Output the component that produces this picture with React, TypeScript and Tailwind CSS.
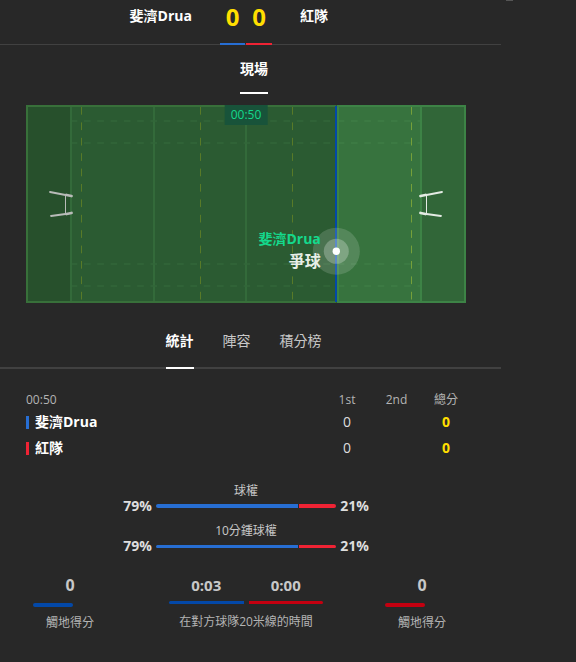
import { useState } from 'react';

interface Team {
  name: string;
  first: number;
  total: number;
  color: string;
}

interface Possession {
  label: string;
  home: number;
  away: number;
  bar: string;
}

const teams: Team[] = [
  { name: '斐濟Drua', first: 0, total: 0, color: 'bg-[#276ed3]' },
  { name: '紅隊', first: 0, total: 0, color: 'bg-[#ef2334]' },
];

const possession: Possession[] = [
  { label: '球權', home: 79, away: 21, bar: 'h-1' },
  { label: '10分鍾球權', home: 79, away: 21, bar: 'h-[3px]' },
];

const tabs = ['統計', '陣容', '積分榜'];

function Pitch() {
  return (
    <div className="relative">
      <svg viewBox="0 0 440 198" className="block w-full" aria-hidden="true">
        <rect width="440" height="198" fill="#2b5b32" />
        <rect width="45" height="198" fill="#27502c" />
        <rect x="311" width="84" height="198" fill="#37733e" />
        <rect x="395" width="45" height="198" fill="#316638" />

        {/* Touch lines */}
        <g fill="none" strokeWidth="2">
          <path d="M310 1H1V197H310" stroke="#38703a" />
          <path d="M311 1H439V197H311" stroke="#3d8346" />
          <path d="M45 2V196M128 2V196M220 2V196" stroke="#336a3a" />
          <path d="M312 2V196M395 2V196" stroke="#3d8346" />
        </g>
        <g strokeWidth="1.5" strokeDasharray="6.6 6.7" strokeDashoffset="1.3">
          <path d="M46 16H310M46 38H310M46 159H310M46 181H310" stroke="#33673a" />
          <path d="M313 16H394M313 38H394M313 159H394M313 181H394" stroke="#3f7d45" />
        </g>
        <g strokeDasharray="7.7 7.7">
          <path d="M55.5 2V196M174.5 2V196M266.5 2V196" stroke="#587a28" />
          <path d="M385.5 2V196" stroke="#76a03a" />
        </g>

        {/* Goal posts */}
        <g stroke="#b9bbb9" fill="none" strokeLinecap="round">
          <path d="M39.5 90V109" strokeWidth="1" />
          <path d="M24 87L39.5 90M25 111L39.5 109" strokeWidth="1.8" />
          <path d="M40.5 90L45.5 91M40.5 109L45.5 108" strokeWidth="2.8" />
        </g>
        <g stroke="#e4ebe4" fill="none" strokeLinecap="round">
          <path d="M400.5 90V109" strokeWidth="1" />
          <path d="M416 87L400.5 90M415 111L400.5 109" strokeWidth="1.8" />
          <path d="M399.5 90L394.5 91M399.5 109L394.5 108" strokeWidth="2.8" />
        </g>

        <path d="M310 1V197" stroke="#0348a8" strokeWidth="2" />
        <circle cx="310.3" cy="146.3" r="23.5" fill="#fff" fillOpacity="0.15" />
        <circle cx="310.3" cy="146.3" r="12.5" fill="#fff" fillOpacity="0.25" />
        <circle cx="310.3" cy="146.3" r="3.7" fill="#fff" />
      </svg>

      <span className="absolute left-1/2 top-0 -translate-x-1/2 bg-[#18533a] px-1.5 text-xs leading-5 text-[#14d98c]">
        00:50
      </span>
      <div className="absolute right-[33%] top-[62%] flex flex-col items-end font-bold">
        <span className="text-sm leading-[22px] text-[#14d98c]">斐濟Drua</span>
        <span className="text-base leading-[22px] text-[#e8efe8]">爭球</span>
      </div>
    </div>
  );
}

function PossessionBar({ label, home, away, bar }: Possession) {
  return (
    <div className="flex flex-col items-center">
      <span className="text-xs leading-5 text-[#c8c8c8]">{label}</span>
      <div className="flex w-full items-center justify-center gap-1 text-sm leading-[10px] font-bold text-[#dedede]">
        <span>{home}%</span>
        <div className={`flex w-[41%] gap-px overflow-hidden rounded-sm ${bar}`}>
          <div className="bg-[#276ed3]" style={{ width: `${home}%` }} />
          <div className="bg-[#ef2334]" style={{ width: `${away}%` }} />
        </div>
        <span>{away}%</span>
      </div>
    </div>
  );
}

function TryCount({ value, color }: { value: number; color: string }) {
  return (
    <div className="flex w-[88px] flex-col items-center">
      <span className="text-base leading-5 font-bold text-[#c8c8c8]">{value}</span>
      <div className={`mt-2 ml-[7px] h-1 w-10 self-start rounded-sm ${color}`} />
      <span className="mt-1.5 text-xs leading-5 text-[#b4b4b4]">觸地得分</span>
    </div>
  );
}

export default function App() {
  const [activeTab, setActiveTab] = useState(tabs[0]);

  return (
    <div className="flex min-h-screen bg-[#282828] font-['Open_Sans','Noto_Sans_CJK_TC',sans-serif] text-white">
      <main className="flex-1">
        <header className="grid h-[45px] grid-cols-[1fr_auto_1fr] gap-7 border-b border-[#414141] pr-[9px]">
          <span className="pt-1.5 text-right text-sm leading-5 font-bold">{teams[0].name}</span>
          <div className="-mb-px flex gap-px text-center text-2xl leading-[34px] font-bold text-[#ffdf00]">
            <span className="w-[25px] border-b-2 border-[#276ed3]">{teams[0].total}</span>
            <span className="w-[26px] border-b-2 border-[#ef2334]">{teams[1].total}</span>
          </div>
          <span className="pt-1.5 text-sm leading-5 font-bold">{teams[1].name}</span>
        </header>

        <nav className="flex justify-center pl-[7px]">
          <button className="h-[49px] border-b-2 border-white text-sm leading-5 font-bold">現場</button>
        </nav>

        <div className="mt-[11px] pr-[35px] pl-[26px]">
          <Pitch />
        </div>

        <nav className="mt-6 flex h-[42px] justify-center gap-[29px] border-b-2 border-[#414141] pr-[14px]">
          {tabs.map((tab) => (
            <button
              key={tab}
              onClick={() => setActiveTab(tab)}
              className={
                activeTab === tab
                  ? '-mb-0.5 border-b-2 border-white pb-3 text-sm leading-5 font-bold text-white'
                  : '-mb-0.5 border-b-2 border-transparent pb-3 text-sm leading-5 text-[#c8c8c8]'
              }
            >
              {tab}
            </button>
          ))}
        </nav>

        <div className="mt-[22px] pr-[30px] pl-[26px]">
          <table className="w-full text-sm leading-5">
            <thead>
              <tr className="text-xs leading-[18px] text-[#b4b4b4]">
                <th className="text-left font-normal">00:50</th>
                <th className="w-[50px] font-normal">1st</th>
                <th className="w-[49px] font-normal">2nd</th>
                <th className="w-[50px] font-normal">總分</th>
              </tr>
            </thead>
            <tbody>
              {teams.map((team) => (
                <tr key={team.name} className="h-[26px]">
                  <td>
                    <div className="flex items-center gap-1.5 font-bold">
                      <span className={`h-[13px] w-[3px] ${team.color}`} />
                      {team.name}
                    </div>
                  </td>
                  <td className="text-center text-[#dedede]">{team.first}</td>
                  <td />
                  <td className="text-center font-bold text-[#ffdf00]">{team.total}</td>
                </tr>
              ))}
            </tbody>
          </table>
        </div>

        <section className="mt-5 flex flex-col gap-2.5 pr-[35px] pl-[26px]">
          {possession.map((item) => (
            <PossessionBar key={item.label} {...item} />
          ))}
        </section>

        <section className="mt-6 flex justify-between pr-[35px] pl-[26px]">
          <TryCount value={0} color="bg-[#0348a8]" />
          <div className="flex w-[35%] flex-col items-center">
            <div className="flex w-full gap-[5px] text-center text-[15px] leading-5 font-bold text-[#c8c8c8]">
              <div className="flex-1">
                0:03
                <div className="mt-1.5 h-[3px] rounded-l-sm bg-[#0348a8]" />
              </div>
              <div className="flex-1">
                0:00
                <div className="mt-1.5 h-[3px] rounded-r-sm bg-[#c40010]" />
              </div>
            </div>
            <span className="mt-2 text-xs leading-5 whitespace-nowrap text-[#b4b4b4]">在對方球隊20米線的時間</span>
          </div>
          <TryCount value={0} color="bg-[#c40010]" />
        </section>
      </main>

      <aside className="w-[75px] pl-[5px]">
        <div className="h-px w-[7px] bg-[#555555]" />
      </aside>
    </div>
  );
}
